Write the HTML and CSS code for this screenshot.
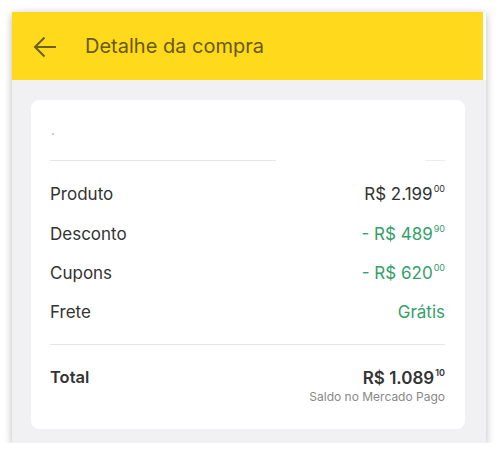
FILE: index.html
```html
<!DOCTYPE html>
<html lang="pt-BR">

<head>
  <meta charset="UTF-8">
  <meta name="viewport" content="width=device-width, initial-scale=1.0">
  <link rel="stylesheet" href="styles.css">
</head>

<body>
  <main class="screen">
    <header class="topbar">
      <svg class="topbar__back" viewBox="0 0 24 22" width="24" height="22">
        <path d="M23 11H2M11.5 1.5L2 11l9.5 9.5" />
      </svg>
      <h1 class="topbar__title">Detalhe da compra</h1>
    </header>

    <section class="content">
      <div class="card">
        <div class="card__head">
          <span class="card__dot"></span>
          <div class="card__rule card__rule--split">
            <span class="card__rule-a"></span>
            <span class="card__rule-b"></span>
          </div>
        </div>

        <ul class="summary">
          <li class="summary__row">
            <span>Produto</span>
            <span class="price">R$ 2.199<sup>00</sup></span>
          </li>
          <li class="summary__row">
            <span>Desconto</span>
            <span class="price price--green">- R$ 489<sup>90</sup></span>
          </li>
          <li class="summary__row">
            <span>Cupons</span>
            <span class="price price--green">- R$ 620<sup>00</sup></span>
          </li>
          <li class="summary__row">
            <span>Frete</span>
            <span class="price price--green">Grátis</span>
          </li>
        </ul>

        <div class="card__rule"></div>

        <div class="total">
          <span class="total__label">Total</span>
          <div class="total__value">
            <span class="price price--bold">R$ 1.089<sup>10</sup></span>
            <span class="total__note">Saldo no Mercado Pago</span>
          </div>
        </div>
      </div>
    </section>
  </main>
</body>

</html>
```

FILE: styles.css
```css
* {
  box-sizing: border-box;
}

body {
  margin: 0;
  padding: 12px 14px 0 12px;
  background-color: #fff;
  font-family: "Inter", "Lato", sans-serif;
  color: #333;
}

.screen {
  display: flex;
  flex-direction: column;
  width: 474px;
  height: 431px;
  background-color: #f1f1f3;
  box-shadow: 0 2px 8px rgba(0, 0, 0, 0.28);
}

.topbar {
  display: flex;
  align-items: center;
  gap: 28px;
  height: 68px;
  padding: 0 0 0 21px;
  background-color: #ffd91c;
  border-right: 3px solid #fff;
}

.topbar__back {
  fill: none;
  stroke: #6e6010;
  stroke-width: 2;
  margin-top: 2px;
}

.topbar__title {
  margin: 0;
  font-size: 20px;
  font-weight: 400;
  color: #665a0c;
}

.content {
  flex: 1;
  padding: 20px 21px 14px 19px;
}

.card {
  display: flex;
  flex-direction: column;
  height: 100%;
  padding: 0 20px 0 19px;
  background-color: #fff;
  border-radius: 8px;
}

.card__head {
  display: flex;
  flex-direction: column;
  padding-top: 33px;
}

.card__dot {
  width: 2px;
  height: 2px;
  margin-left: 2px;
  border-radius: 50%;
  background-color: #bbb;
}

.card__rule {
  height: 1px;
  background-color: #e6e6e6;
}

.card__rule--split {
  display: flex;
  justify-content: space-between;
  margin-top: 25px;
  background-color: transparent;
}

.card__rule-a {
  width: 226px;
  background-color: #e6e6e6;
}

.card__rule-b {
  width: 20px;
  background-color: #ececec;
}

.summary {
  list-style: none;
  margin: 0;
  padding: 16px 0 9px;
}

.summary__row {
  display: flex;
  justify-content: space-between;
  align-items: baseline;
  height: 39.5px;
  padding-top: 6px;
  font-size: 17px;
}

.price {
  font-size: 17px;
  color: #333;
}

.price sup {
  font-size: 9px;
  vertical-align: 8px;
  margin-left: 1px;
}

.price--green {
  color: #34a06a;
}

.price--bold {
  font-weight: 600;
}

.total {
  display: flex;
  justify-content: space-between;
  padding-top: 22px;
}

.total__label {
  font-size: 16.5px;
  font-weight: 600;
}

.total__value {
  display: flex;
  flex-direction: column;
  align-items: flex-end;
  gap: 1px;
}

.total__note {
  font-size: 12px;
  color: #888;
}
```
